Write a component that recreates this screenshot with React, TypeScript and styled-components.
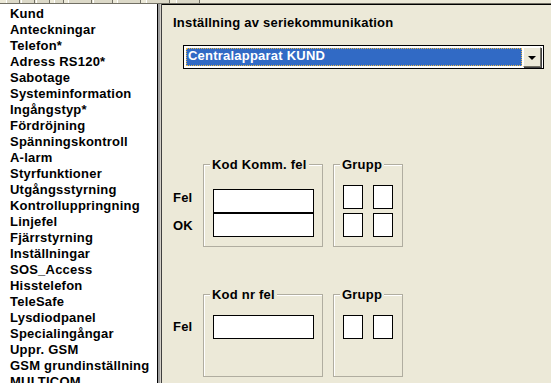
import React from "react";
import styled, { createGlobalStyle } from "styled-components";

const Global = createGlobalStyle`
  html, body { margin: 0; padding: 0; background: #ece9d8; }
  body { width: 551px; height: 383px; overflow: hidden; }
  * { box-sizing: border-box; }
`;

const Window = styled.div`
  width: 551px;
  height: 383px;
  display: flex;
  flex-direction: column;
  background: #ece9d8;
  font-family: "Liberation Sans", Arial, sans-serif;
  font-weight: bold;
  font-size: 13px;
  letter-spacing: 0.22px;
  color: #000;
  overflow: hidden;
`;

const Strip = styled.div`
  height: 4px;
  display: flex;
  align-items: flex-end;
  gap: 1px;
  padding-left: 2px;
  background: #ece9d8;
  border-bottom: 1px solid #716f64;
`;

const Stub = styled.div<{ $w: number; $ml?: number }>`
  width: ${(p) => p.$w}px;
  margin-left: ${(p) => p.$ml ?? 0}px;
  height: 3px;
  background: #dcd9c8;
  border-left: 1px solid #fff;
  border-right: 1px solid #716f64;
`;

const Main = styled.div`
  flex: 1;
  display: flex;
  min-height: 0;
`;

const List = styled.ul`
  width: 158px;
  margin: 0;
  padding: 2px 0 0 10px;
  list-style: none;
  background: #fff;
  border-right: 1px solid #000;
  overflow: hidden;
`;

const Item = styled.li`
  height: 16px;
  line-height: 16px;
  white-space: nowrap;
`;

const Splitter = styled.div`
  width: 4px;
  background: #a0a0a0;
  border-right: 1px solid #404040;
  box-shadow: inset -1px 0 0 #d4d0c8;
`;

const Panel = styled.div`
  flex: 1;
  display: flex;
  flex-direction: column;
  padding: 10px 0 0 11px;
  border-top: 1px solid #000;
  background: #ece9d8;
`;

const Title = styled.div`
  height: 16px;
  line-height: 16px;
`;

const Combo = styled.div`
  margin: 14px 0 0 10px;
  width: 361px;
  height: 24px;
  display: flex;
  align-items: stretch;
  border: 1px solid #000;
  background: #fff;
  padding: 1px;
`;

const Selection = styled.div`
  flex: 1;
  margin: 1px;
  background: #316ac5;
  color: #fff;
  line-height: 16px;
  padding-left: 2px;
  outline: 1px dotted #e8b84a;
  outline-offset: -1px;
`;

const DropButton = styled.div`
  width: 18px;
  display: flex;
  align-items: center;
  justify-content: center;
  background: #ece9d8;
  border-top: 1px solid #fff;
  border-left: 1px solid #fff;
  border-right: 1px solid #716f64;
  border-bottom: 1px solid #716f64;
  box-shadow: 1px 1px 0 #404040;
  margin-right: 1px;
`;

const Arrow = styled.div`
  width: 0;
  height: 0;
  border-left: 4px solid transparent;
  border-right: 4px solid transparent;
  border-top: 4px solid #000;
  margin-top: 1px;
`;

const GroupRow = styled.div<{ $mt: number }>`
  display: flex;
  gap: 10px;
  margin-top: ${(p) => p.$mt}px;
`;

const Labels = styled.div`
  width: 20px;
  display: flex;
  flex-direction: column;
`;

const Label = styled.div<{ $mt: number }>`
  height: 16px;
  line-height: 16px;
  margin-top: ${(p) => p.$mt}px;
`;

const Group = styled.div<{ $w: number }>`
  position: relative;
  width: ${(p) => p.$w}px;
  height: 83px;
  border: 1px solid #b0ada0;
  box-shadow: inset 1px 1px 0 #fff;
  padding: 20px 0 0 9px;
`;

const Legend = styled.span`
  position: absolute;
  top: -8px;
  left: 6px;
  padding: 0 2px;
  line-height: 16px;
  background: #ece9d8;
`;

const Field = styled.div<{ $mt?: number }>`
  width: 101px;
  height: 24px;
  margin-top: ${(p) => p.$mt ?? 0}px;
  background: #fff;
  border: 1px solid #000;
`;

const BoxGrid = styled.div`
  display: grid;
  grid-template-columns: 20px 20px;
  grid-auto-rows: 24px;
  column-gap: 10px;
  row-gap: 4px;
`;

const Box = styled.div`
  background: #fff;
  border: 1px solid #000;
`;

const items = [
  "Kund",
  "Anteckningar",
  "Telefon*",
  "Adress RS120*",
  "Sabotage",
  "Systeminformation",
  "Ingångstyp*",
  "Fördröjning",
  "Spänningskontroll",
  "A-larm",
  "Styrfunktioner",
  "Utgångsstyrning",
  "Kontrolluppringning",
  "Linjefel",
  "Fjärrstyrning",
  "Inställningar",
  "SOS_Access",
  "Hisstelefon",
  "TeleSafe",
  "Lysdiodpanel",
  "Specialingångar",
  "Uppr. GSM",
  "GSM grundinställning",
  "MULTICOM",
];

export default function App() {
  return (
    <Window>
      <Global />
      <Strip>
        <Stub $w={14} $ml={4} />
        <Stub $w={14} />
        <Stub $w={14} />
        <Stub $w={10} $ml={3} />
        <Stub $w={24} $ml={3} />
        <Stub $w={20} />
        <Stub $w={24} $ml={3} />
        <Stub $w={24} $ml={4} />
        <Stub $w={24} $ml={5} />
      </Strip>
      <Main>
        <List>
          {items.map((t) => (
            <Item key={t}>{t}</Item>
          ))}
        </List>
        <Splitter />
        <Panel>
          <Title>Inställning av seriekommunikation</Title>
          <Combo>
            <Selection>Centralapparat KUND</Selection>
            <DropButton>
              <Arrow />
            </DropButton>
          </Combo>
          <GroupRow $mt={95}>
            <Labels>
              <Label $mt={26}>Fel</Label>
              <Label $mt={12}>OK</Label>
            </Labels>
            <Group $w={120}>
              <Legend>Kod Komm. fel</Legend>
              <Field $mt={4} />
              <Field />
            </Group>
            <Group $w={70}>
              <Legend>Grupp</Legend>
              <BoxGrid>
                <Box />
                <Box />
                <Box />
                <Box />
              </BoxGrid>
            </Group>
          </GroupRow>
          <GroupRow $mt={47}>
            <Labels>
              <Label $mt={25}>Fel</Label>
            </Labels>
            <Group $w={120}>
              <Legend>Kod nr fel</Legend>
              <Field />
            </Group>
            <Group $w={70}>
              <Legend>Grupp</Legend>
              <BoxGrid>
                <Box />
                <Box />
              </BoxGrid>
            </Group>
          </GroupRow>
        </Panel>
      </Main>
    </Window>
  );
}
